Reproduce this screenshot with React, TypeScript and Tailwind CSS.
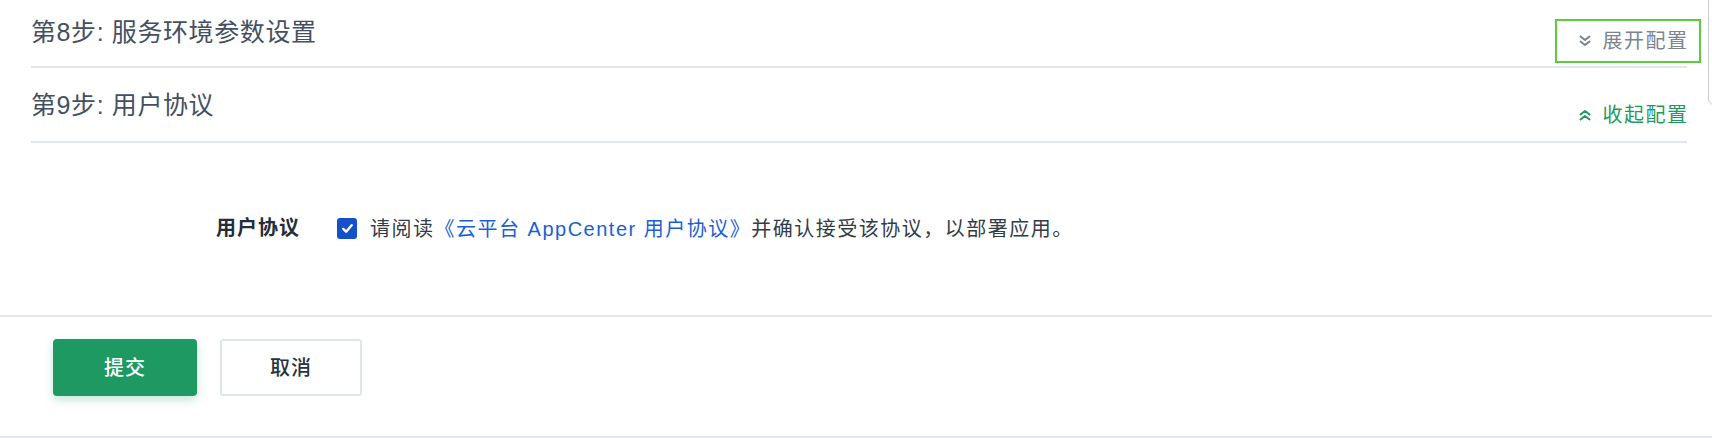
import React from "react";

const FONT = { fontFamily: '"Liberation Sans", "Noto Sans CJK SC", sans-serif' };

function ChevronsDown({ className }: { className?: string }) {
  return (
    <svg viewBox="0 0 12 12" className={className} fill="none" stroke="currentColor" strokeWidth="2" strokeLinecap="round" strokeLinejoin="round">
      <path d="M1.5 1.5 L6 5 L10.5 1.5" />
      <path d="M1.5 6.5 L6 10 L10.5 6.5" />
    </svg>
  );
}

function ChevronsUp({ className }: { className?: string }) {
  return (
    <svg viewBox="0 0 12 12" className={className} fill="none" stroke="currentColor" strokeWidth="2" strokeLinecap="round" strokeLinejoin="round">
      <path d="M1.5 5.5 L6 2 L10.5 5.5" />
      <path d="M1.5 10.5 L6 7 L10.5 10.5" />
    </svg>
  );
}

export default function App() {
  return (
    <div className="relative w-[1712px] h-[438px] bg-white overflow-hidden" style={FONT}>
      {/* scrollbar edge */}
      <div className="absolute left-[1708px] top-[-12px] w-[14px] h-[117px] rounded-[6px] border border-[#c9ccd1] bg-white" />

      <div className="pl-[31px] pr-[25px]">
        {/* Step 8 */}
        <div className="flex justify-between items-start h-[68px] border-b-2 border-[#dfe7ef]">
          <div className="mt-[16px] text-[25px] leading-[32px] tracking-[0.6px] text-[#435063]">第8步: 服务环境参数设置</div>
          <div className="relative mt-[27px] flex items-center text-[20px] leading-[28px] tracking-[1.5px] text-[#7b8492]">
            <div className="absolute left-[-24px] right-[-14px] top-[-8px] bottom-[-8px] border-2 border-[#5ccc3c]" />
            <ChevronsDown className="w-[12px] h-[12px] mr-[12px]" />
            <span className="-mr-[1.5px]">展开配置</span>
          </div>
        </div>

        {/* Step 9 */}
        <div className="flex justify-between items-start h-[75px] border-b-2 border-[#dfe7ef]">
          <div className="mt-[21px] text-[25px] leading-[32px] tracking-[0.6px] text-[#435063]">第9步: 用户协议</div>
          <div className="mt-[33px] flex items-center text-[20px] leading-[28px] tracking-[1.5px] text-[#1f9a5f]">
            <ChevronsUp className="w-[12px] h-[12px] mr-[12px]" />
            <span className="-mr-[1.5px]">收起配置</span>
          </div>
        </div>
      </div>

      {/* Agreement content */}
      <div className="h-[172px] flex items-start pl-[216px] pt-[69px]">
        <div className="flex items-center h-[32px]">
          <div className="text-[20px] font-bold tracking-[1px] text-[#242d39]">用户协议</div>
          <div className="ml-[37px] w-[20px] h-[21px] rounded-[3px] bg-[#1450c9] flex items-center justify-center">
            <svg viewBox="0 0 14 14" className="w-[13px] h-[13px]" fill="none" stroke="white" strokeWidth="2.6" strokeLinecap="round" strokeLinejoin="round">
              <path d="M2.5 7.5 L5.5 10.5 L11.5 3.5" />
            </svg>
          </div>
          <div className="ml-[13px] mt-[2px] text-[20px] tracking-[1.5px] text-[#333c48]">
            请阅读<span className="text-[#1a5fd6]">《云平台 AppCenter 用户协议》</span>并确认接受该协议，以部署应用。
          </div>
        </div>
      </div>

      {/* Footer */}
      <div className="border-t-2 border-[#dfe7ef] h-[123px] border-b-2 pl-[53px] pt-[22px] flex gap-[23px]">
        <button className="w-[144px] h-[57px] rounded-[4px] bg-[#1e9962] text-white text-[20px] font-medium tracking-[1px] shadow-[0_4px_10px_rgba(30,153,98,0.25)]">
          提交
        </button>
        <button className="w-[142px] h-[57px] rounded-[3px] bg-white border-2 border-[#dfe5ed] text-[#273343] text-[20px] font-medium tracking-[1px]">
          取消
        </button>
      </div>
    </div>
  );
}
